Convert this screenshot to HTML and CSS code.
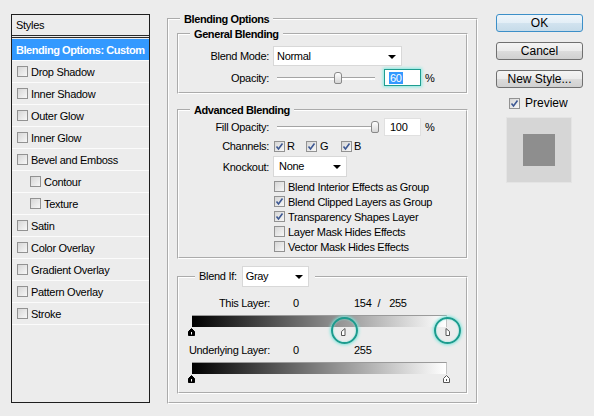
FILE: index.html
```html
<!DOCTYPE html>
<html lang="en">
<head>
    <meta charset="UTF-8">
    <title>Layer Style</title>
    <link rel="stylesheet" href="styles.css">
</head>
<body>
<div class="dialog">
    <div class="styles-panel">
        <div class="styles-head">Styles</div>
        <div class="style-row active">Blending Options: Custom</div>
        <div class="style-row"><span class="cb"></span>Drop Shadow</div>
        <div class="style-row"><span class="cb"></span>Inner Shadow</div>
        <div class="style-row"><span class="cb"></span>Outer Glow</div>
        <div class="style-row"><span class="cb"></span>Inner Glow</div>
        <div class="style-row"><span class="cb"></span>Bevel and Emboss</div>
        <div class="style-row sub"><span class="cb"></span>Contour</div>
        <div class="style-row sub"><span class="cb"></span>Texture</div>
        <div class="style-row"><span class="cb"></span>Satin</div>
        <div class="style-row"><span class="cb"></span>Color Overlay</div>
        <div class="style-row"><span class="cb"></span>Gradient Overlay</div>
        <div class="style-row"><span class="cb"></span>Pattern Overlay</div>
        <div class="style-row"><span class="cb"></span>Stroke</div>
    </div>

    <fieldset class="group main">
        <legend>Blending Options</legend>

        <fieldset class="group general">
            <legend>General Blending</legend>
            <div class="row mode-row">
                <span class="lbl">Blend Mode:</span>
                <div class="select mode">Normal</div>
            </div>
            <div class="row num-row">
                <span class="lbl">Opacity:</span>
                <div class="slider"><div class="thumb" style="left:57px"></div></div>
                <div class="num focus"><span class="sel">60</span></div>
                <span class="pct">%</span>
            </div>
        </fieldset>

        <fieldset class="group advanced">
            <legend>Advanced Blending</legend>
            <div class="row num-row fill-row">
                <span class="lbl">Fill Opacity:</span>
                <div class="slider"><div class="thumb" style="left:94px"></div></div>
                <div class="num">100</div>
                <span class="pct">%</span>
            </div>
            <div class="row chan-row">
                <span class="lbl">Channels:</span>
                <div class="channels">
                    <span class="ch"><span class="cb on"><svg viewBox="0 0 9 9"><path d="M1.5 4.5 3.5 7 7.5 1.5"/></svg></span>R</span>
                    <span class="ch"><span class="cb on"><svg viewBox="0 0 9 9"><path d="M1.5 4.5 3.5 7 7.5 1.5"/></svg></span>G</span>
                    <span class="ch"><span class="cb on"><svg viewBox="0 0 9 9"><path d="M1.5 4.5 3.5 7 7.5 1.5"/></svg></span>B</span>
                </div>
            </div>
            <div class="row knock-row">
                <span class="lbl">Knockout:</span>
                <div class="select knock">None</div>
            </div>
            <div class="checklist">
                <div class="check"><span class="cb"></span>Blend Interior Effects as Group</div>
                <div class="check"><span class="cb on"><svg viewBox="0 0 9 9"><path d="M1.5 4.5 3.5 7 7.5 1.5"/></svg></span>Blend Clipped Layers as Group</div>
                <div class="check"><span class="cb on"><svg viewBox="0 0 9 9"><path d="M1.5 4.5 3.5 7 7.5 1.5"/></svg></span>Transparency Shapes Layer</div>
                <div class="check"><span class="cb"></span>Layer Mask Hides Effects</div>
                <div class="check"><span class="cb"></span>Vector Mask Hides Effects</div>
            </div>
        </fieldset>

        <fieldset class="group blendif">
            <legend><span class="legend-inner">Blend If: <span class="select gray">Gray</span></span></legend>
            <div class="vals">
                <span class="lbl wide">This Layer:</span>
                <span class="v0">0</span>
                <span>154</span><span class="slash">/</span><span>255</span>
            </div>
            <div class="bar"></div>
            <div class="marks">
                <svg class="mk" style="left:-4px" viewBox="0 0 7 8"><path class="dark" d="M0.5 7.5V3.5L3.5 0.5 6.5 3.5V7.5Z"/><path class="tick" d="M3.5 4V6.5"/></svg>
                <svg class="mk half" style="left:149px" viewBox="0 0 5 8"><path class="light" d="M0.5 7.5V3.5L4 0.5V7.5Z"/></svg>
                <svg class="mk half" style="left:253px" viewBox="0 0 5 8"><path class="light" d="M1 0.5 4.5 3.5V7.5H1Z"/></svg>
                <div class="ring" style="left:139px"></div>
                <div class="ring" style="left:242px"></div>
            </div>
            <div class="vals under">
                <span class="lbl wide">Underlying Layer:</span>
                <span class="v0">0</span>
                <span>255</span>
            </div>
            <div class="bar"></div>
            <div class="marks">
                <svg class="mk" style="left:-4px" viewBox="0 0 7 8"><path class="dark" d="M0.5 7.5V3.5L3.5 0.5 6.5 3.5V7.5Z"/><path class="tick" d="M3.5 4V6.5"/></svg>
                <svg class="mk" style="left:251px" viewBox="0 0 7 8"><path class="light" d="M0.5 7.5V3.5L3.5 0.5 6.5 3.5V7.5Z"/><path class="tick dark-tick" d="M3.5 4V6"/></svg>
            </div>
        </fieldset>
    </fieldset>

    <div class="actions">
        <div class="btn default">OK</div>
        <div class="btn">Cancel</div>
        <div class="btn">New Style...</div>
        <div class="preview-row"><span class="cb on"><svg viewBox="0 0 9 9"><path d="M1.5 4.5 3.5 7 7.5 1.5"/></svg></span>Preview</div>
        <div class="preview-box"><div class="swatch"></div></div>
    </div>
</div>
</body>
</html>
```

FILE: styles.css
```css
* {
    box-sizing: border-box;
}
body {
    margin: 0;
    background: #ececec;
    font-family: "Liberation Sans", Arial, sans-serif;
    font-size: 11px;
    letter-spacing: -0.3px;
    color: #000;
}
.dialog {
    display: flex;
    align-items: flex-start;
    height: 416px;
    padding: 12px 0 0 11px;
}

/* styles list */
.styles-panel {
    width: 139px;
    height: 389px;
    margin-top: 2px;
    border: 1px solid #1e1e1e;
}
.styles-head {
    height: 23px;
    line-height: 20px;
    padding-left: 4px;
    border-bottom: 3px double #2a2a2a;
    margin-bottom: 1px;
}
.style-row {
    display: flex;
    align-items: center;
    gap: 3px;
    height: 22px;
    padding-left: 5px;
    border-bottom: 1px solid #fbfbfb;
}
.style-row.active {
    background: #3399ff;
    color: #fff;
    font-weight: bold;
    letter-spacing: -0.45px;
    padding-left: 4px;
}
.style-row.sub {
    padding-left: 18px;
}

/* checkboxes */
.cb {
    display: inline-block;
    flex: none;
    width: 11px;
    height: 11px;
    border: 1px solid #929292;
    background: linear-gradient(135deg, #d6d6d6, #f7f7f7);
}
.cb svg {
    display: block;
    width: 9px;
    height: 9px;
    fill: none;
    stroke: #3d5893;
    stroke-width: 1.6;
}

/* group boxes */
.group {
    margin: 0;
    padding: 0;
    min-width: 0;
    border: 2px groove #fff;
}
.group > legend {
    margin-left: 11px;
    padding: 0 4px;
    line-height: 14px;
    font-weight: bold;
    letter-spacing: -0.4px;
}
.main {
    width: 311px;
    margin-left: 17px;
    padding: 0 8px 8px;
}
.main > legend {
    margin-left: 3px;
}
.general {
    margin-top: 1px;
    padding-bottom: 6px;
}
.advanced {
    margin-top: 9px;
    padding-bottom: 3px;
}
.blendif {
    margin-top: 7px;
    padding-bottom: 9px;
}
.blendif > legend {
    margin-left: 16px;
    padding: 0 6px 0 4px;
    line-height: 21px;
    font-weight: normal;
    letter-spacing: -0.3px;
}
.legend-inner {
    display: flex;
    align-items: center;
    gap: 5px;
}

/* rows */
.row {
    display: flex;
    align-items: center;
}
.lbl {
    width: 90px;
    margin-right: 4px;
    text-align: right;
}
.lbl.wide {
    width: 91px;
    margin-right: 0;
}
.mode-row {
    height: 20px;
    margin-top: 5px;
}
.num-row {
    height: 17px;
    margin-top: 3px;
}
.fill-row {
    height: 18px;
    margin-top: 1px;
}
.chan-row {
    height: 12px;
    margin-top: 4px;
}
.knock-row {
    height: 21px;
    margin-top: 4px;
}

.select {
    position: relative;
    display: block;
    height: 20px;
    padding-left: 3px;
    line-height: 18px;
    background: #fff;
    border: 1px solid #d8d8d8;
}
.select::after {
    content: "";
    position: absolute;
    right: 5px;
    top: 8px;
    border-left: 4px solid transparent;
    border-right: 4px solid transparent;
    border-top: 4px solid #000;
}
.select.mode {
    width: 129px;
}
.select.knock {
    width: 74px;
    height: 21px;
    line-height: 19px;
    padding-left: 5px;
}
.select.gray {
    width: 67px;
    height: 21px;
    line-height: 19px;
}

.slider {
    position: relative;
    width: 98px;
    height: 12px;
    margin-left: 4px;
}
.slider::before {
    content: "";
    position: absolute;
    left: 0;
    right: 0;
    top: 5px;
    height: 2px;
    border-top: 1px solid #a4a4a4;
    background: #fff;
}
.thumb {
    position: absolute;
    top: 0;
    width: 8px;
    height: 12px;
    border: 1px solid #888;
    border-radius: 3px 3px 2px 2px;
    background: linear-gradient(#fefefe, #d6d6d6);
}
.num {
    width: 37px;
    height: 100%;
    margin-left: 9px;
    padding-left: 5px;
    line-height: 16px;
    background: #fff;
    border: 1px solid #e0e0e0;
}
.num.focus {
    padding-left: 4px;
    border-color: #1f9d90;
    box-shadow: 0 0 3px 1px #86ebe1;
}
.sel {
    display: inline-block;
    line-height: 12px;
    padding: 0 1px;
    background: #3399ff;
    color: #fff;
}
.pct {
    margin-left: 4px;
}

.channels {
    display: flex;
    margin-left: 1px;
}
.ch {
    display: flex;
    align-items: center;
    gap: 2px;
    width: 32px;
}
.ch:nth-child(2) {
    width: 35px;
    gap: 3px;
}

.checklist {
    margin: 2px 0 0 95px;
}
.check {
    display: flex;
    align-items: center;
    gap: 3px;
    height: 15px;
}

/* blend if */
.vals {
    display: flex;
    height: 13px;
    line-height: 13px;
    margin-top: 10px;
}
.vals.under {
    margin-top: 8px;
}
.v0 {
    width: 61px;
    margin-left: 23px;
}
.slash {
    margin: 0 9px 0 6px;
}
.bar {
    width: 255px;
    height: 12px;
    margin: 5px 0 0 13px;
    border-top: 1px solid #9a9a9a;
    border-right: 1px solid #c4c4c4;
    background: linear-gradient(to right, #000, #fff);
}
.marks {
    position: relative;
    width: 255px;
    height: 9px;
    margin-left: 13px;
}
.mk {
    position: absolute;
    top: 1px;
    width: 7px;
    height: 8px;
    overflow: visible;
}
.mk.half {
    width: 5px;
}
.mk .dark {
    fill: #000;
    stroke: #000;
}
.mk .light {
    fill: #fff;
    stroke: #555;
}
.mk .tick {
    stroke: #fff;
    stroke-width: 1;
}
.mk .dark-tick {
    stroke: #555;
}
.ring {
    position: absolute;
    top: -10px;
    width: 27px;
    height: 27px;
    border: 2px solid #1b9c8e;
    border-radius: 50%;
    box-shadow: 0 0 3px 1px #7fe6dc, inset 0 0 2px #7fe6dc;
}

/* buttons */
.actions {
    display: flex;
    flex-direction: column;
    width: 87px;
    margin: 2px 0 0 18px;
    font-size: 12px;
    letter-spacing: 0;
}
.btn {
    height: 18px;
    margin-bottom: 10px;
    line-height: 16px;
    text-align: center;
    border: 1px solid #707070;
    border-radius: 3px;
    background: linear-gradient(#f4f4f4 0%, #ebebeb 50%, #dcdcdc 51%, #d0d0d0 100%);
}
.btn.default {
    border-color: #3c8fc8;
    background: linear-gradient(#eef5fa 0%, #e3eef6 50%, #d2e3ef 51%, #c6dbe9 100%);
}
.preview-row {
    display: flex;
    align-items: center;
    gap: 5px;
    height: 14px;
    margin: -2px 0 0 13px;
}
.preview-box {
    display: flex;
    align-items: center;
    justify-content: center;
    width: 66px;
    height: 66px;
    margin: 7px 0 0 10px;
    background: #d6d6d6;
    border: 1px solid #e4e4e4;
}
.swatch {
    width: 32px;
    height: 32px;
    background: #8e8e8e;
}
```
